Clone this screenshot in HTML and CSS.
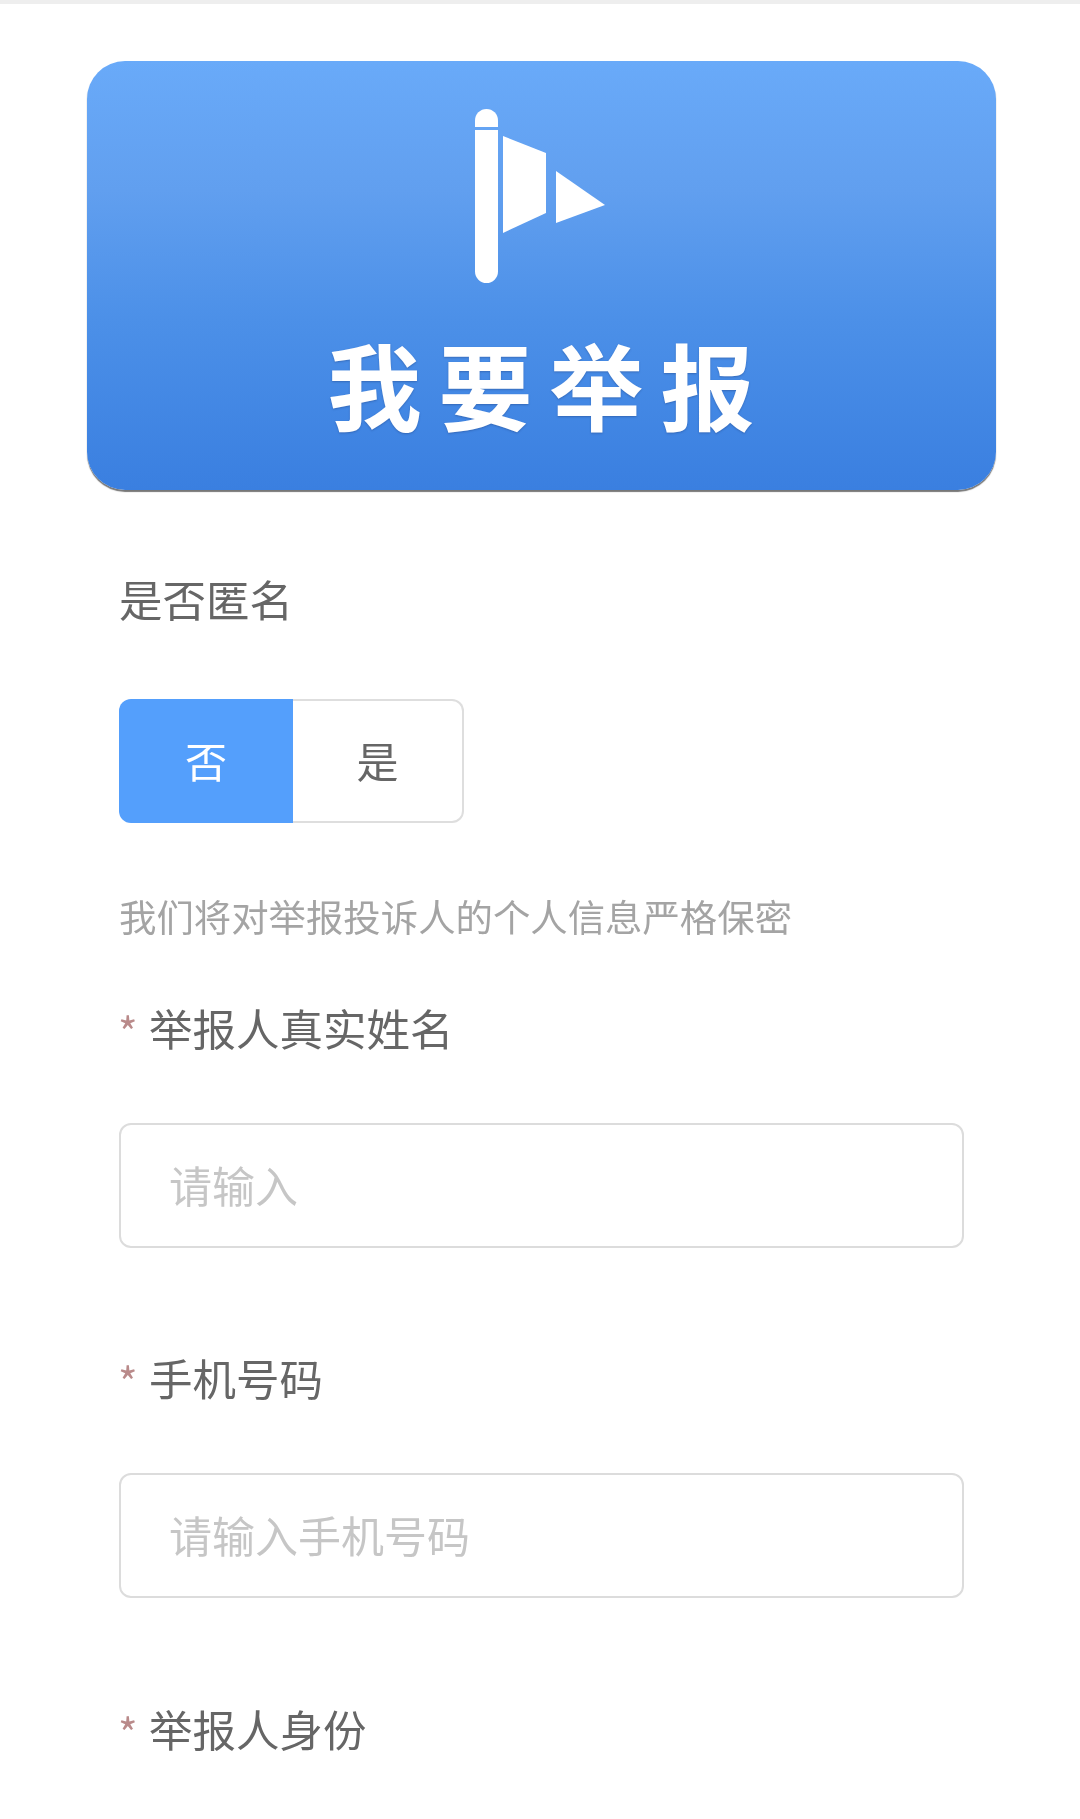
FILE: index.html
```html
<!DOCTYPE html>
<html lang="zh-CN">
<head>
<meta charset="utf-8">
<title>我要举报</title>
<link rel="stylesheet" href="styles.css">
</head>
<body>
<div class="topbar"></div>
<main class="page">
  <header class="banner">
    <svg class="flag" viewBox="0 0 130 174" width="130" height="174" aria-hidden="true">
      <path d="M0 18V11.500A11.500 11.500 0 0 1 23 11.500V18Z"/>
      <path d="M0 21H23V162.500A11.500 11.500 0 0 1 0 162.500Z"/>
      <path d="M28 27L71 44V104L28 124Z"/>
      <path d="M81 62L130 96L81 114Z"/>
    </svg>
    <h1 class="banner-title">我要举报</h1>
  </header>
  <form class="form">
    <div class="label anon-label">是否匿名</div>
    <div class="toggle">
      <span class="toggle-item active">否</span>
      <span class="toggle-item">是</span>
    </div>
    <p class="hint">我们将对举报投诉人的个人信息严格保密</p>
    <div class="label req first-req"><span class="star">*</span>举报人真实姓名</div>
    <div class="input">请输入</div>
    <div class="label req"><span class="star">*</span>手机号码</div>
    <div class="input">请输入手机号码</div>
    <div class="label req last-req"><span class="star">*</span>举报人身份</div>
  </form>
</main>
</body>
</html>
```
FILE: styles.css
```css
* { box-sizing: border-box; }
html, body { margin: 0; padding: 0; background: #fff; }
body {
  height: 1819px;
  overflow: hidden;
  font-family: "Noto Sans CJK SC", "Noto Sans", sans-serif;
  color: #666;
}
.topbar { height: 4px; background: #eeeeee; }
.page { padding: 57px 84px 0 87px; filter: blur(0.5px); }
.banner {
  height: 429px;
  border-radius: 38px;
  background: linear-gradient(180deg, #69aaf9 0%, #619fef 30%, #4c90e8 60%, #3a7fe0 100%);
  box-shadow: 0 2px 1px #777;
  display: flex;
  flex-direction: column;
  align-items: center;
  padding-top: 48px;
}
.flag { fill: #fff; display: block; margin-left: -3px; }
.banner-title {
  margin: 50px 0 0 16px;
  font-size: 94px;
  line-height: 100px;
  font-weight: 700;
  letter-spacing: 17px;
  color: #fff;
  white-space: nowrap;
  text-shadow: 0 1px 2px rgba(30, 60, 120, .4);
}
.form { padding: 0 32px; }
.label {
  font-size: 43.500px;
  line-height: 60px;
  color: #666;
  white-space: nowrap;
}
.anon-label { margin-top: 79px; }
.toggle {
  display: flex;
  width: 345px;
  height: 124px;
  margin-top: 70px;
}
.toggle-item {
  flex: 1 1 0;
  display: flex;
  align-items: center;
  justify-content: center;
  padding-bottom: 3px;
  font-size: 42px;
  color: #666;
  border: 2px solid #dedede;
  border-left: 0;
  border-radius: 0 12px 12px 0;
  background: #fff;
}
.toggle-item.active {
  flex: 0 0 174px;
  border: 0;
  border-radius: 12px 0 0 12px;
  background: #549ffc;
  color: #fff;
}
.hint {
  margin: 68px 0 0;
  font-size: 37.400px;
  line-height: 50px;
  color: #a4a4a4;
  white-space: nowrap;
}
.req { margin-top: 100px; position: relative; padding-left: 30px; }
.first-req { margin-top: 57px; }
.last-req { margin-top: 101px; }
.star {
  position: absolute;
  left: -1px;
  top: 3px;
  font-size: 42px;
  color: #b98a8a;
}
.input {
  height: 125px;
  margin-top: 65px;
  border: 2px solid #dcdcdc;
  border-radius: 12px;
  padding: 0 0 4px 48px;
  display: flex;
  align-items: center;
  font-size: 43px;
  color: #c6c6c6;
  background: #fff;
}
```
